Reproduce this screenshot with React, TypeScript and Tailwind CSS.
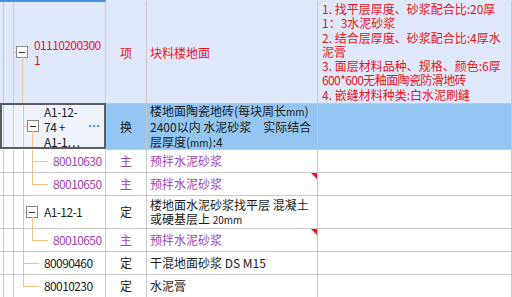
import React from "react";

const LINE = "#f2c48c";

function V({ x, top = 0, bottom = 0, h }: { x: number; top?: number; bottom?: number; h?: number }) {
  return (
    <div
      className="absolute w-px"
      style={h !== undefined ? { left: x, top, height: h, background: LINE } : { left: x, top, bottom, background: LINE }}
    />
  );
}
function H({ x1, x2, y }: { x1: number; x2: number; y: number }) {
  return <div className="absolute h-px" style={{ left: x1, width: x2 - x1, top: y, background: LINE }} />;
}
function Box({ x, y }: { x: number; y: number }) {
  return (
    <div
      className="absolute w-[12px] h-[12px] border border-[#8a8a8a] bg-white flex items-center justify-center"
      style={{ left: x, top: y }}
    >
      <div className="w-[6px] h-px bg-[#333]" />
    </div>
  );
}

const font = { fontFamily: '"Noto Sans CJK SC", "DejaVu Sans", sans-serif' };

function Tri() {
  return (
    <div className="absolute right-0 top-0 w-0 h-0 border-t-[6px] border-l-[6px] border-t-[#e8141c] border-l-transparent" />
  );
}

export default function App() {
  const cell = "border-r border-b border-[#c9c9c9] relative";
  const code = "absolute top-0 bottom-0 flex items-center whitespace-nowrap tracking-[-0.6px]";
  return (
    <div className="w-[512px] h-[297px] overflow-hidden bg-white text-[12px] text-[#1a1a1a]" style={font}>
      <div className="grid grid-cols-[106px_41px_171px_194px]">
        {/* Row 1 */}
        <div className={`${cell} h-[104px] bg-[#dfe9fb] border-t-2 border-t-[#4a90e2]`}>
          <V x={3} />
          <V x={13} />
          <H x1={13} x2={17} y={50} />
          <Box x={16} y={44} />
          <V x={22} top={55} />
          <div className="absolute left-[34px] top-0 bottom-0 flex flex-col justify-center leading-[15px] text-[#e8141c] pb-[2px] whitespace-nowrap tracking-[-0.6px]">
            <div>01110200300</div>
            <div>1</div>
          </div>
        </div>
        <div className={`${cell} h-[104px] bg-[#dfe9fb] border-t-2 border-t-[#dfe9fb] flex items-center justify-center text-[#e8141c]`}>
          项
        </div>
        <div className={`${cell} h-[104px] bg-[#dfe9fb] border-t-2 border-t-[#dfe9fb] flex items-center pl-[3px] text-[#e8141c]`}>
          块料楼地面
        </div>
        <div className={`${cell} h-[104px] bg-[#dfe9fb] border-t-2 border-t-[#dfe9fb] pl-[4px] leading-[14.3px] text-[#e8141c] whitespace-nowrap`}>
          <div>1. 找平层厚度、砂浆配合比:20厚</div>
          <div>1：3水泥砂浆</div>
          <div>2. 结合层厚度、砂浆配合比:4厚水</div>
          <div>泥膏</div>
          <div>3. 面层材料品种、规格、颜色:6厚</div>
          <div className="tracking-[-0.6px]">600*600无釉面陶瓷防滑地砖</div>
          <div>4. 嵌缝材料种类:白水泥刷缝</div>
        </div>

        {/* Row 2 */}
        <div className="h-[46px] relative bg-[#eef3fc] border-2 border-[#5c5c5c] -mt-px">
          <V x={1} />
          <V x={11} />
          <V x={21} />
          <H x1={21} x2={25} y={21} />
          <Box x={25} y={15} />
          <V x={30} top={26} />
          <div className="absolute left-[42px] top-0 bottom-0 flex flex-col justify-center leading-[15px] whitespace-nowrap tracking-[-0.4px]">
            <div>A1-12-</div>
            <div>74 +</div>
            <div>A1-1…</div>
          </div>
          <div className="absolute left-[86px] top-[13px] text-[#3a6fd6] font-bold whitespace-nowrap leading-[15px]">…</div>
        </div>
        <div className={`${cell} h-[46px] bg-[#93c6f2] flex items-center justify-center`}>换</div>
        <div className={`${cell} h-[46px] bg-[#93c6f2] pl-[3px] flex flex-col justify-center leading-[15px] whitespace-nowrap`}>
          <div>
            楼地面陶瓷地砖(每块周长<span className="text-[10px]">mm</span>)
          </div>
          <div>2400以内 水泥砂浆　实际结合</div>
          <div>
            层厚度(<span className="text-[10px]">mm</span>):4
          </div>
        </div>
        <div className={`${cell} h-[46px] bg-[#93c6f2]`} />

        {/* Row 3 */}
        <div className={`${cell} h-[23px]`}>
          <V x={3} />
          <V x={13} />
          <V x={23} />
          <V x={32} />
          <H x1={32} x2={48} y={11} />
          <div className={`${code} left-[53px] text-[#a23fb5]`}>80010630</div>
        </div>
        <div className={`${cell} h-[23px] flex items-center justify-center text-[#a23fb5]`}>主</div>
        <div className={`${cell} h-[23px] flex items-center pl-[3px] text-[#a23fb5]`}>预拌水泥砂浆</div>
        <div className={`${cell} h-[23px]`} />

        {/* Row 4 */}
        <div className={`${cell} h-[23px]`}>
          <V x={3} />
          <V x={13} />
          <V x={23} />
          <V x={32} top={0} h={12} />
          <H x1={32} x2={48} y={11} />
          <div className={`${code} left-[53px] text-[#a23fb5]`}>80010650</div>
        </div>
        <div className={`${cell} h-[23px] flex items-center justify-center text-[#a23fb5]`}>主</div>
        <div className={`${cell} h-[23px] flex items-center pl-[3px] text-[#a23fb5]`}>
          预拌水泥砂浆
          <Tri />
        </div>
        <div className={`${cell} h-[23px]`} />

        {/* Row 5 */}
        <div className={`${cell} h-[33px]`}>
          <V x={3} />
          <V x={13} />
          <V x={23} />
          <H x1={23} x2={27} y={16} />
          <Box x={26} y={10} />
          <V x={32} top={21} />
          <div className={`${code} left-[44px]`}>A1-12-1</div>
        </div>
        <div className={`${cell} h-[33px] flex items-center justify-center`}>定</div>
        <div className={`${cell} h-[33px] pl-[3px] flex flex-col justify-center leading-[14px] whitespace-nowrap`}>
          <div>楼地面水泥砂浆找平层 混凝土</div>
          <div>
            或硬基层上 <span className="text-[10px]">20mm</span>
          </div>
        </div>
        <div className={`${cell} h-[33px]`} />

        {/* Row 6 */}
        <div className={`${cell} h-[23px]`}>
          <V x={3} />
          <V x={13} />
          <V x={23} />
          <V x={32} top={0} h={12} />
          <H x1={32} x2={48} y={11} />
          <div className={`${code} left-[53px] text-[#a23fb5]`}>80010650</div>
        </div>
        <div className={`${cell} h-[23px] flex items-center justify-center text-[#a23fb5]`}>主</div>
        <div className={`${cell} h-[23px] flex items-center pl-[3px] text-[#a23fb5]`}>
          预拌水泥砂浆
          <Tri />
        </div>
        <div className={`${cell} h-[23px]`} />

        {/* Row 7 */}
        <div className={`${cell} h-[23px]`}>
          <V x={3} />
          <V x={13} />
          <V x={23} />
          <H x1={23} x2={39} y={11} />
          <div className={`${code} left-[44px]`}>80090460</div>
        </div>
        <div className={`${cell} h-[23px] flex items-center justify-center`}>定</div>
        <div className={`${cell} h-[23px] flex items-center pl-[3px] whitespace-nowrap`}>干混地面砂浆 DS M15</div>
        <div className={`${cell} h-[23px]`} />

        {/* Row 8 */}
        <div className={`${cell} h-[23px]`}>
          <V x={3} />
          <V x={13} />
          <V x={23} top={0} h={12} />
          <H x1={23} x2={39} y={11} />
          <div className={`${code} left-[44px]`}>80010230</div>
        </div>
        <div className={`${cell} h-[23px] flex items-center justify-center`}>定</div>
        <div className={`${cell} h-[23px] flex items-center pl-[3px]`}>水泥膏</div>
        <div className={`${cell} h-[23px]`} />
      </div>
    </div>
  );
}
